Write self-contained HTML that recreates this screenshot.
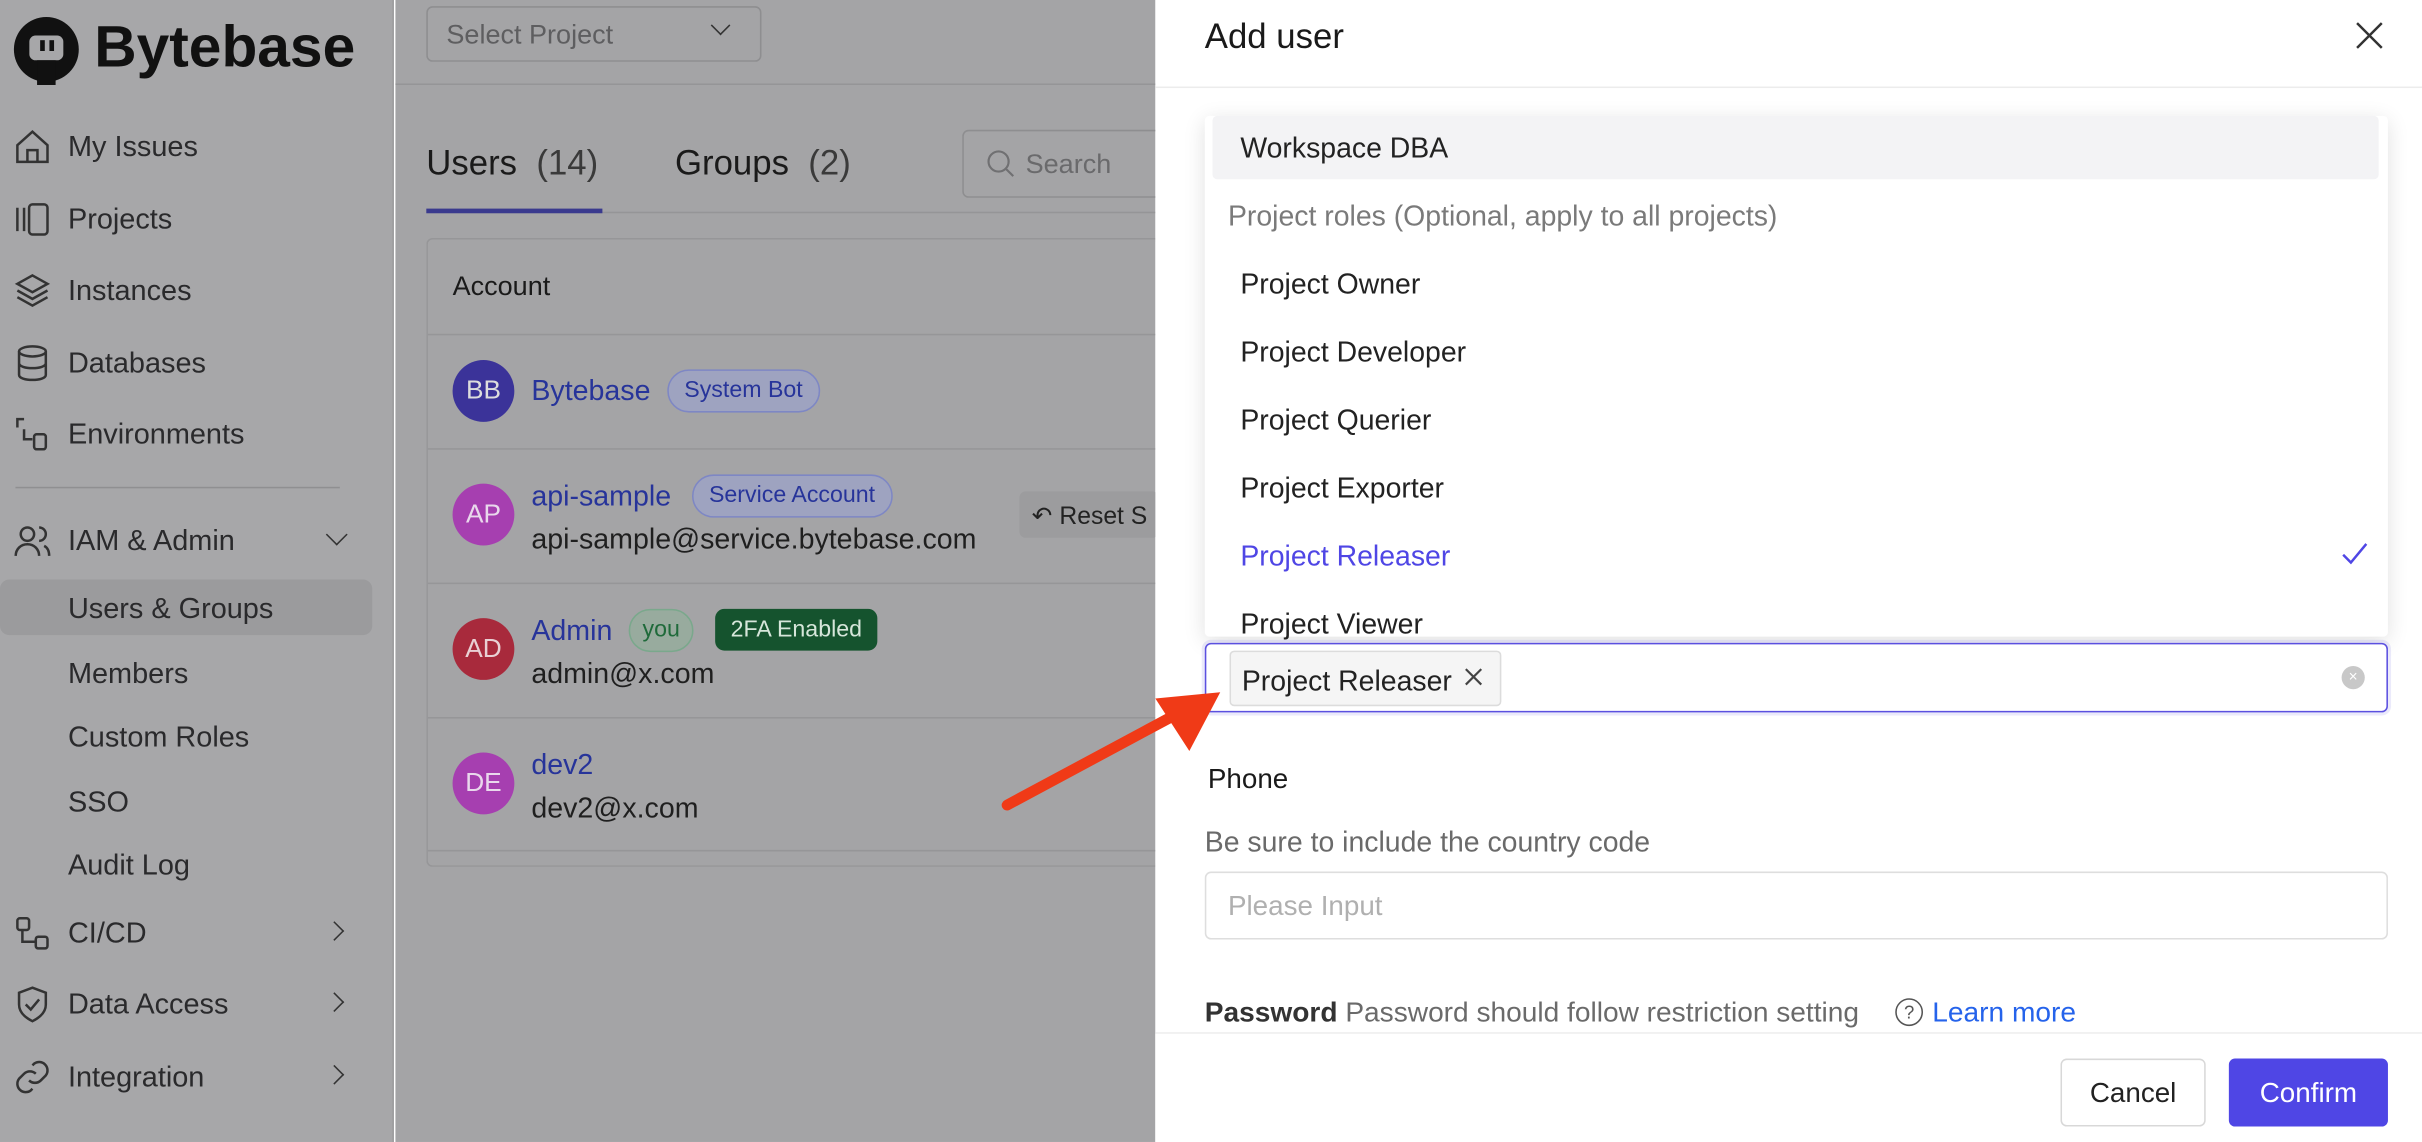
<!DOCTYPE html>
<html><head><meta charset="utf-8"><style>
*{box-sizing:border-box;margin:0;padding:0}
html,body{width:2422px;height:1142px;overflow:hidden;background:#fff}
#w{position:absolute;left:0;top:0;width:1568px;height:739px;transform:scale(1.5446,1.5453);transform-origin:0 0;font-family:"Liberation Sans",sans-serif;color:#1f1f1f}
.a{position:absolute;white-space:nowrap}
.nav{font-size:18.7px;color:#2a2a2c}
.nav svg{position:absolute;left:-36px;top:-2px}
.it{font-size:18.4px;color:#222}
</style></head><body><div id="w">
<div class="a" style="left:0;top:0;width:255px;height:739px;background:#a7a7a9;border-right:1px solid #9c9c9e"></div>
<div class="a" style="left:256px;top:0;width:492px;height:739px;background:#a4a4a6"></div>
<svg class="a" style="left:6px;top:9px" width="48" height="48" viewBox="0 0 48 48"><circle cx="24" cy="23" r="21" fill="#111"/><rect x="13" y="14" width="22" height="16" rx="4" fill="#a7a7a9"/><rect x="20" y="17" width="3" height="7" fill="#111"/><rect x="26" y="17" width="3" height="7" fill="#111"/><rect x="18" y="30" width="12" height="16" fill="#111"/></svg>
<div class="a" style="left:61px;top:10px;font-size:38px;font-weight:bold;color:#111;letter-spacing:0px">Bytebase</div>
<div class="a nav" style="left:44px;top:84px"><svg width="26" height="26" viewBox="0 0 24 24" fill="none" stroke="#333" stroke-width="1.5"><path d="M3 11l9-8 9 8v10H3z"/><path d="M9 21v-7h6v7"/></svg>My Issues</div>
<div class="a nav" style="left:44px;top:131px"><svg width="26" height="26" viewBox="0 0 24 24" fill="none" stroke="#333" stroke-width="1.5"><path d="M3 5v14M7 5v14"/><rect x="10" y="3" width="11" height="18" rx="2"/></svg>Projects</div>
<div class="a nav" style="left:44px;top:177px"><svg width="26" height="26" viewBox="0 0 24 24" fill="none" stroke="#333" stroke-width="1.5"><path d="M12 3l9 5-9 5-9-5z"/><path d="M3 12l9 5 9-5M3 16l9 5 9-5"/></svg>Instances</div>
<div class="a nav" style="left:44px;top:224px"><svg width="26" height="26" viewBox="0 0 24 24" fill="none" stroke="#333" stroke-width="1.5"><ellipse cx="12" cy="5" rx="8" ry="3"/><path d="M4 5v14c0 2 4 3 8 3s8-1 8-3V5M4 12c0 2 4 3 8 3s8-1 8-3"/></svg>Databases</div>
<div class="a nav" style="left:44px;top:270px"><svg width="26" height="26" viewBox="0 0 24 24" fill="none" stroke="#333" stroke-width="1.5"><path d="M7 3H3v5M7 9v6h5"/><rect x="13" y="12" width="7" height="9" rx="1.5"/></svg>Environments</div>
<div class="a" style="left:10px;top:315px;width:210px;height:1px;background:#8f8f91"></div>
<div class="a nav" style="left:44px;top:339px"><svg width="26" height="26" viewBox="0 0 24 24" fill="none" stroke="#333" stroke-width="1.5"><circle cx="9" cy="8" r="4"/><path d="M2 21c0-4 3-7 7-7s7 3 7 7M16 4a4 4 0 010 8M19 15c2 1 3 3 3 6"/></svg>IAM &amp; Admin</div>
<div class="a" style="left:213px;top:341px;width:10px;height:10px;border-right:1.6px solid #333;border-bottom:1.6px solid #333;transform:rotate(45deg)"></div>
<div class="a" style="left:0;top:375px;width:241px;height:36px;background:#9b9b9d;border-radius:6px"></div>
<div class="a nav" style="left:44px;top:383px">Users &amp; Groups</div>
<div class="a nav" style="left:44px;top:425px">Members</div>
<div class="a nav" style="left:44px;top:466px">Custom Roles</div>
<div class="a nav" style="left:44px;top:508px">SSO</div>
<div class="a nav" style="left:44px;top:549px">Audit Log</div>
<div class="a nav" style="left:44px;top:593px"><svg width="26" height="26" viewBox="0 0 24 24" fill="none" stroke="#333" stroke-width="1.5"><rect x="3" y="3" width="7" height="7" rx="1.5"/><rect x="14" y="14" width="7" height="7" rx="1.5"/><path d="M6 10v7h8"/></svg>CI/CD</div>
<div class="a nav" style="left:44px;top:639px"><svg width="26" height="26" viewBox="0 0 24 24" fill="none" stroke="#333" stroke-width="1.5"><path d="M12 2l8 3v7c0 5-4 8-8 10-4-2-8-5-8-10V5z"/><path d="M8 12l3 3 5-6"/></svg>Data Access</div>
<div class="a nav" style="left:44px;top:686px"><svg width="26" height="26" viewBox="0 0 24 24" fill="none" stroke="#333" stroke-width="1.5"><path d="M10 14a5 5 0 007 0l3-3a5 5 0 00-7-7l-1 1M14 10a5 5 0 00-7 0l-3 3a5 5 0 007 7l1-1"/></svg>Integration</div>
<div class="a" style="left:212px;top:598px;width:9px;height:9px;border-right:1.6px solid #333;border-bottom:1.6px solid #333;transform:rotate(-45deg)"></div>
<div class="a" style="left:212px;top:644px;width:9px;height:9px;border-right:1.6px solid #333;border-bottom:1.6px solid #333;transform:rotate(-45deg)"></div>
<div class="a" style="left:212px;top:691px;width:9px;height:9px;border-right:1.6px solid #333;border-bottom:1.6px solid #333;transform:rotate(-45deg)"></div>
<div class="a" style="left:276px;top:4px;width:217px;height:36px;border:1px solid #8e8e90;border-radius:4px"></div>
<div class="a" style="left:289px;top:12px;font-size:17.5px;color:#5e5e60">Select Project</div>
<div class="a" style="left:462px;top:12px;width:9px;height:9px;border-right:1.5px solid #333;border-bottom:1.5px solid #333;transform:rotate(45deg)"></div>
<div class="a" style="left:256px;top:54px;width:492px;height:1px;background:#959597"></div>
<div class="a" style="left:276px;top:93px;font-size:22.5px;color:#1a1a1a">Users <span style="color:#3a3a3a">&nbsp;(14)</span></div>
<div class="a" style="left:437px;top:93px;font-size:22.5px;color:#1a1a1a">Groups <span style="color:#3a3a3a">&nbsp;(2)</span></div>
<div class="a" style="left:276px;top:137px;width:472px;height:1px;background:#959597"></div>
<div class="a" style="left:276px;top:135px;width:114px;height:3px;background:#3a3a8e"></div>
<div class="a" style="left:623px;top:84px;width:140px;height:44px;border:1px solid #8e8e90;border-radius:4px"></div>
<svg class="a" style="left:638px;top:96px" width="20" height="20" viewBox="0 0 20 20" fill="none" stroke="#707072" stroke-width="1.4"><circle cx="8.5" cy="8.5" r="6.5"/><path d="M13.5 13.5L18 18"/></svg>
<div class="a" style="left:664px;top:96px;font-size:17.5px;color:#6a6a6c">Search</div>
<div class="a" style="left:276px;top:154px;width:472px;height:407px;border:1px solid #969698;border-right:none;border-radius:4px 0 0 4px"></div>
<div class="a" style="left:293px;top:175px;font-size:17.5px;color:#1a1a1a">Account</div>
<div class="a" style="left:277px;top:216px;width:471px;height:1px;background:#969698"></div>
<div class="a" style="left:277px;top:290px;width:471px;height:1px;background:#969698"></div>
<div class="a" style="left:277px;top:377px;width:471px;height:1px;background:#969698"></div>
<div class="a" style="left:277px;top:464px;width:471px;height:1px;background:#969698"></div>
<div class="a" style="left:277px;top:550px;width:471px;height:1px;background:#969698"></div>
<div class="a" style="left:293px;top:233px;width:40px;height:40px;border-radius:50%;background:#3b3399;color:#ddd;font-size:17px;text-align:center;line-height:40px">BB</div>
<div class="a" style="left:344px;top:242px;font-size:18.5px;color:#27349a">Bytebase</div>
<div class="a" style="left:432px;top:239px;height:28px;padding:0 10px;border:1px solid #7e87c4;background:#9ea3c0;border-radius:14px;font-size:15px;line-height:26px;color:#27349a">System Bot</div>
<div class="a" style="left:293px;top:313px;width:40px;height:40px;border-radius:50%;background:#a63fb0;color:#e9d8ec;font-size:17px;text-align:center;line-height:40px">AP</div>
<div class="a" style="left:344px;top:310px;font-size:18.5px;color:#27349a">api-sample</div>
<div class="a" style="left:448px;top:307px;height:28px;padding:0 10px;border:1px solid #7e87c4;background:#9ea3c0;border-radius:14px;font-size:15px;line-height:26px;color:#27349a">Service Account</div>
<div class="a" style="left:344px;top:338px;font-size:18.5px;color:#1f1f1f">api-sample@service.bytebase.com</div>
<div class="a" style="left:660px;top:318px;width:90px;height:30px;background:#9c9c9e;border-radius:4px"></div>
<div class="a" style="left:668px;top:324px;font-size:16px;color:#222">↶ Reset S</div>
<div class="a" style="left:293px;top:400px;width:40px;height:40px;border-radius:50%;background:#a82a3c;color:#e9d0d4;font-size:17px;text-align:center;line-height:40px">AD</div>
<div class="a" style="left:344px;top:397px;font-size:18.5px;color:#27349a">Admin</div>
<div class="a" style="left:407px;top:394px;height:28px;padding:0 8px;border:1px solid #7aa88c;background:#98ab9e;border-radius:14px;font-size:15px;line-height:26px;color:#1f6a3a">you</div>
<div class="a" style="left:463px;top:394px;height:27px;padding:0 10px;background:#15532e;border-radius:6px;font-size:15px;line-height:27px;color:#d6e6da">2FA Enabled</div>
<div class="a" style="left:344px;top:425px;font-size:18.5px;color:#1f1f1f">admin@x.com</div>
<div class="a" style="left:293px;top:487px;width:40px;height:40px;border-radius:50%;background:#a63fb0;color:#e9d8ec;font-size:17px;text-align:center;line-height:40px">DE</div>
<div class="a" style="left:344px;top:484px;font-size:18.5px;color:#27349a">dev2</div>
<div class="a" style="left:344px;top:512px;font-size:18.5px;color:#1f1f1f">dev2@x.com</div>
<div class="a" style="left:748px;top:0;width:820px;height:739px;background:#fff"></div>
<div class="a" style="left:780px;top:11px;font-size:22.5px;color:#1a1a1a">Add user</div>
<svg class="a" style="left:1524px;top:13px" width="20" height="20" viewBox="0 0 20 20" stroke="#333" stroke-width="1.6"><path d="M2 2l16 16M18 2L2 18"/></svg>
<div class="a" style="left:748px;top:56px;width:820px;height:1px;background:#ececec"></div>
<div class="a" style="left:780px;top:75px;width:766px;height:337px;background:#fff;box-shadow:0 3px 14px rgba(0,0,0,.12);border-radius:3px"></div>
<div class="a" style="left:785px;top:75px;width:755px;height:41px;background:#f3f3f5;border-radius:3px"></div>
<div class="a it" style="left:803px;top:85px">Workspace DBA</div>
<div class="a" style="left:795px;top:129px;font-size:18.4px;color:#7a7a7a">Project roles (Optional, apply to all projects)</div>
<div class="a it" style="left:803px;top:173px">Project Owner</div>
<div class="a it" style="left:803px;top:217px">Project Developer</div>
<div class="a it" style="left:803px;top:261px">Project Querier</div>
<div class="a it" style="left:803px;top:305px">Project Exporter</div>
<div class="a it" style="left:803px;top:349px;color:#4f46e5">Project Releaser</div>
<svg class="a" style="left:1515px;top:350px" width="18" height="16" viewBox="0 0 18 16" fill="none" stroke="#4f46e5" stroke-width="1.6"><path d="M2 9l5 5L17 2"/></svg>
<div class="a it" style="left:803px;top:393px">Project Viewer</div>
<div class="a" style="left:780px;top:416px;width:766px;height:45px;border:1.5px solid #5b50e0;border-radius:4px;box-shadow:0 0 0 2px rgba(91,80,224,.12);background:#fff"></div>
<div class="a" style="left:796px;top:421px;width:176px;height:36px;border:1px solid #dcdcdc;background:#f5f5f5;border-radius:3px"></div>
<div class="a it" style="left:804px;top:430px">Project Releaser</div>
<svg class="a" style="left:947px;top:431px" width="14" height="14" viewBox="0 0 14 14" stroke="#444" stroke-width="1.4"><path d="M2 2l10 10M12 2L2 12"/></svg>
<div class="a" style="left:1516px;top:431px;width:15px;height:15px;border-radius:50%;background:#c8c8c8;color:#fff;font-size:10px;text-align:center;line-height:15px">×</div>
<div class="a" style="left:782px;top:494px;font-size:18px;color:#1a1a1a">Phone</div>
<div class="a" style="left:780px;top:534px;font-size:18.4px;color:#6a6a6a">Be sure to include the country code</div>
<div class="a" style="left:780px;top:564px;width:766px;height:44px;border:1px solid #dedede;border-radius:4px"></div>
<div class="a" style="left:795px;top:576px;font-size:18px;color:#b0b0b0">Please Input</div>
<div class="a" style="left:780px;top:645px;font-size:18.2px;color:#333"><b style="font-weight:600">Password</b> <span style="color:#6a6a6a">Password should follow restriction setting</span></div>
<div class="a" style="left:1227px;top:646px;width:18px;height:18px;border:1.4px solid #555;border-radius:50%;font-size:12px;text-align:center;line-height:16px;color:#555">?</div>
<div class="a" style="left:1251px;top:645px;font-size:18.2px;color:#2563eb">Learn more</div>
<div class="a" style="left:748px;top:668px;width:820px;height:1px;background:#ececec"></div>
<div class="a" style="left:748px;top:669px;width:820px;height:70px;background:#fff"></div>
<div class="a" style="left:1334px;top:685px;width:94px;height:44px;border:1px solid #d8d8d8;border-radius:4px;font-size:18px;text-align:center;line-height:42px;color:#222">Cancel</div>
<div class="a" style="left:1443px;top:685px;width:103px;height:44px;background:#4f46e5;border-radius:4px;font-size:18px;text-align:center;line-height:44px;color:#fff">Confirm</div>
<svg class="a" style="left:640px;top:430px" width="160" height="100" viewBox="640 430 160 100"><path d="M652 521L762 462" stroke="#f03a17" stroke-width="7" stroke-linecap="round"/><path d="M790 448L748 452L770 486Z" fill="#f03a17"/></svg>
</div></body></html>
